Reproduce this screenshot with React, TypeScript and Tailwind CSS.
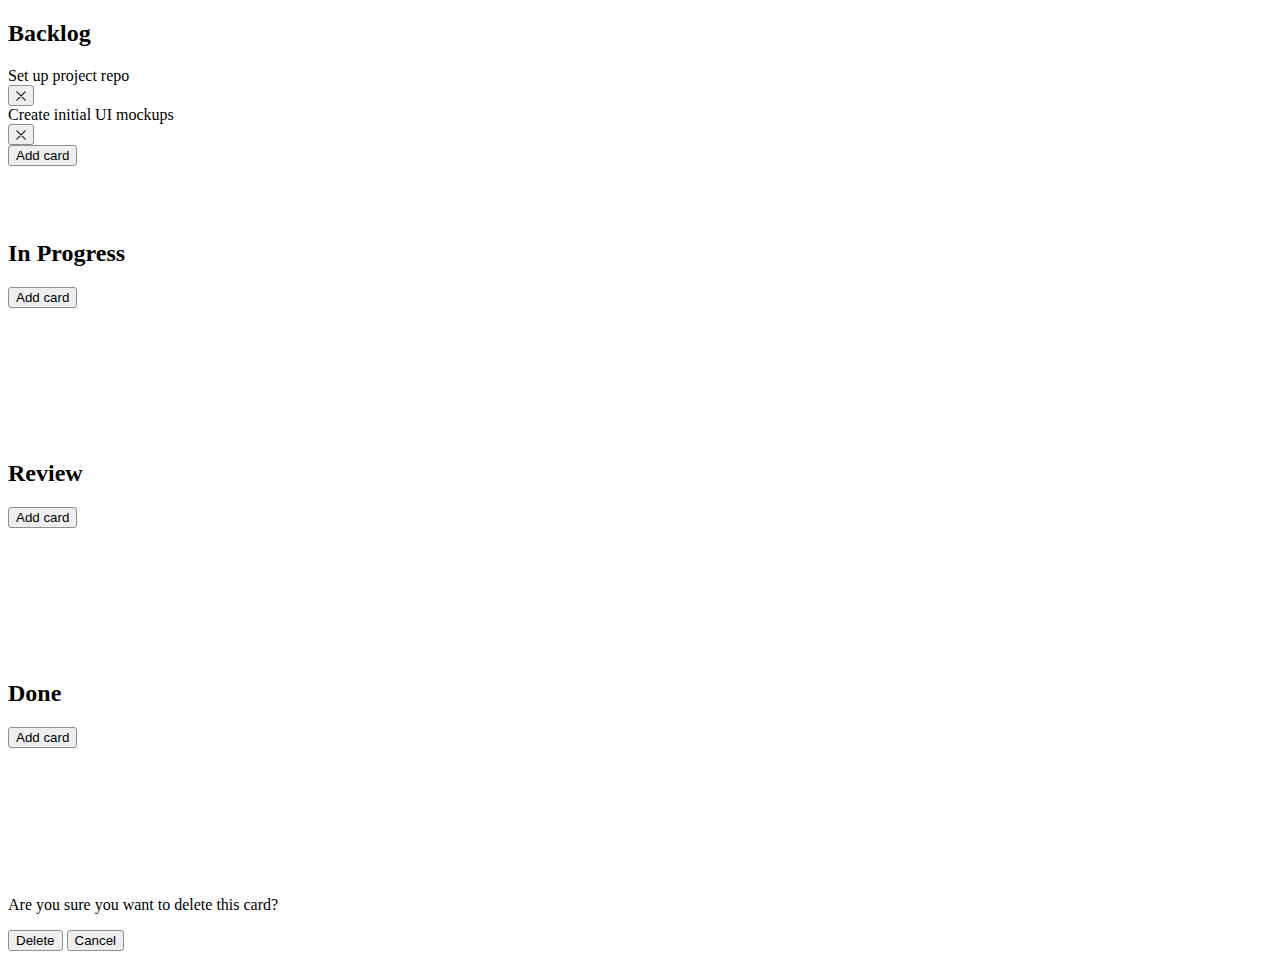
import { useState } from "react"

type Card = { id: number; title: string }
type Column = { id: string; title: string; cards: Card[] }

const initialColumns: Column[] = [
  {
    id: "backlog",
    title: "Backlog",
    cards: [
      { id: 1, title: "Set up project repo" },
      { id: 2, title: "Create initial UI mockups" },
    ],
  },
  { id: "progress", title: "In Progress", cards: [] },
  { id: "review", title: "Review", cards: [] },
  { id: "done", title: "Done", cards: [] },
]

// mimics the browser's default push button
const btn =
  "inline-block border border-[#8f8f8f] rounded-[3px] bg-[#efefef] px-[7px] py-[2px] font-['Liberation_Sans',Arial,sans-serif] text-[13.333px] leading-[normal] text-black"

function CloseGlyph() {
  return (
    <svg
      width="10"
      height="10"
      viewBox="0 0 10 10"
      className="inline-block align-[-1px]"
      fill="none"
      stroke="#111"
      strokeWidth="1.1"
      strokeLinecap="round"
    >
      <path d="M0.8 0.8 9.2 9.2M9.2 0.8 0.8 9.2" />
    </svg>
  )
}

export default function App() {
  const [columns, setColumns] = useState<Column[]>(initialColumns)
  const [pendingDelete, setPendingDelete] = useState<{ col: string; card: number } | null>(null)

  const addCard = (colId: string) => {
    setColumns(cols =>
      cols.map(c =>
        c.id === colId
          ? { ...c, cards: [...c.cards, { id: Date.now(), title: "New card" }] }
          : c
      )
    )
  }

  const confirmDelete = () => {
    if (!pendingDelete) return
    setColumns(cols =>
      cols.map(c =>
        c.id === pendingDelete.col
          ? { ...c, cards: c.cards.filter(card => card.id !== pendingDelete.card) }
          : c
      )
    )
    setPendingDelete(null)
  }

  return (
    <div className="px-2 pb-2 font-['Liberation_Serif','Times_New_Roman',serif] text-[16px] leading-[normal] text-black">
      {columns.map(col => (
        <div key={col.id} className="min-h-[200px]">
          <h2 className="my-[19.92px] text-[24px] font-bold leading-[normal]">{col.title}</h2>
          {col.cards.map(card => (
            <div key={card.id}>
              <div>{card.title}</div>
              <button
                className={btn}
                aria-label="Delete card"
                onClick={() => setPendingDelete({ col: col.id, card: card.id })}
              >
                <CloseGlyph />
              </button>
            </div>
          ))}
          <button className={btn} onClick={() => addCard(col.id)}>
            Add card
          </button>
        </div>
      ))}

      {/* delete confirmation */}
      <div>
        <p className="my-4">Are you sure you want to delete this card?</p>
        <button className={btn} onClick={confirmDelete}>
          Delete
        </button>{" "}
        <button className={btn} onClick={() => setPendingDelete(null)}>
          Cancel
        </button>
      </div>
    </div>
  )
}
